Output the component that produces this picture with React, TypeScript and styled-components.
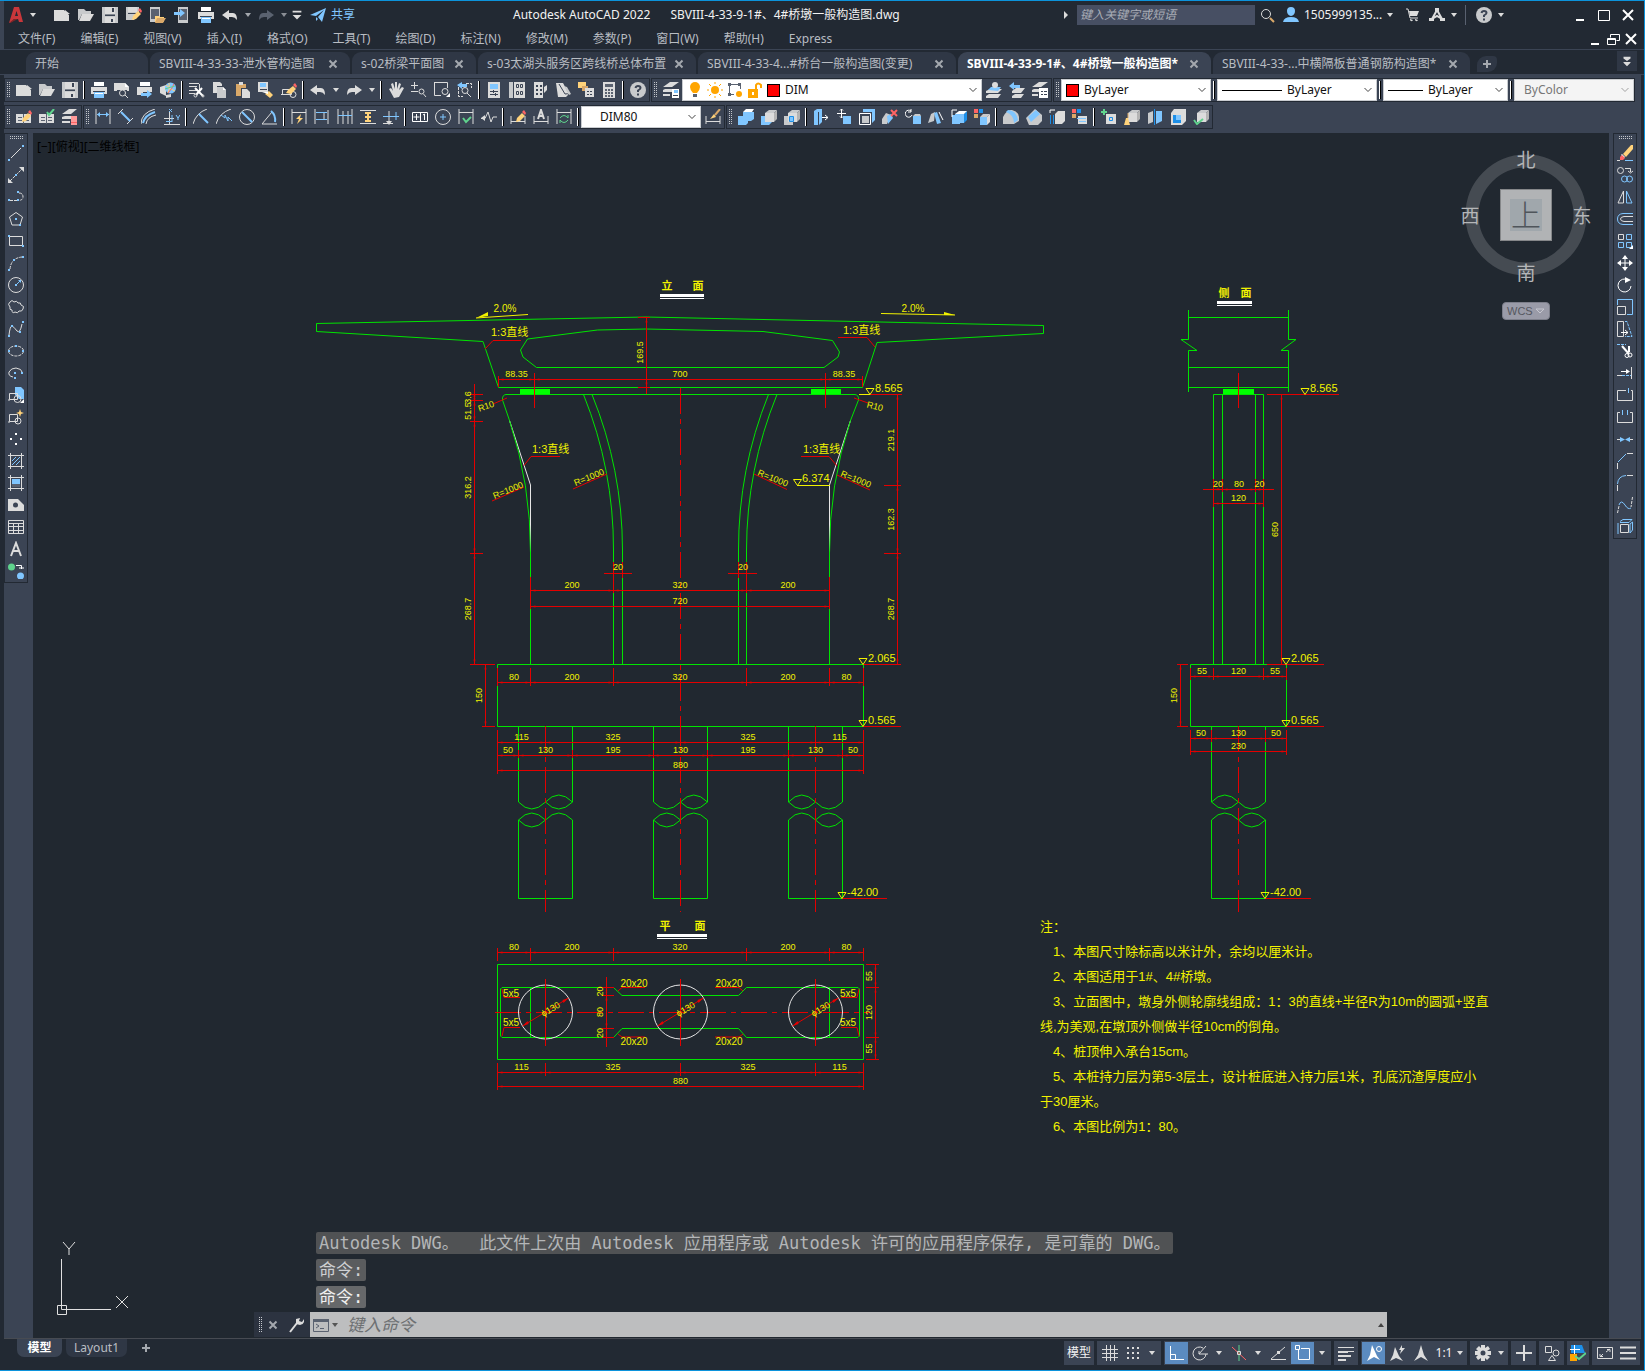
import React from "react";
import styled, { createGlobalStyle, css } from "styled-components";

const color = {
  chrome: "#222933",
  panel: "#3b4454",
  tab: "#2f3745",
  canvas: "#212830",
  edge: "#0c93dc",
  text: "#b9bdc3",
  bright: "#f2f2f2",
  green: "#00e400",
  red: "#e40000",
  yellow: "#f2f200",
};

const ui = `"Noto Sans", "Noto Sans CJK SC", sans-serif`;
const mono = `"DejaVu Sans Mono", "Noto Sans CJK SC", monospace`;
const cad = `"Liberation Sans", "Noto Sans CJK SC", sans-serif`;

const GlobalStyle = createGlobalStyle`
  *, *::before, *::after { box-sizing: border-box; }
  html, body, #root { height: 100%; }
  body { margin: 0; background: ${color.chrome}; font: 12px/16px ${ui}; color: ${color.text}; }
  button, input, select { font: inherit; color: inherit; }
  button { border: 0; padding: 0; background: none; }
`;

/* ---------- icons ---------- */

const palette: Record<string, string> = {
  W: "#dcdcdc", B: "#80c6ff", Y: "#ffd27a", R: "#ff6464", G: "#5fd38d", O: "#ffa500",
  D: "#3b4454", K: "#5a6270", L: "#b4b4b4", X: "#ffffff", M: "#c8cacc", P: "#ff9a9a", A: "#d23a3a", U: "#1d8fe8", T: "#d9a869", Z: "#8d3030",
};

// Each layer is [mode + palette key, path]; mode "s" strokes, "h" strokes dashed, "w" strokes wide, "f" fills.
type Layer = [string, string];

const page: Layer = ["fW", "M0 3H10L15 8V14H0Z M11 3L16 7H11Z"];
const folder: Layer[] = [["fM", "M0 2H6L8 4H13V7H4L1 13H0Z"], ["fW", "M4 7H16L12 14H1Z"]];
const disk: Layer[] = [["fM", "M0 0H16V16H0Z"], ["fW", "M3 0H13V7H3Z M3 10H13V16H3Z"], ["fD", "M3 7.5H13V9H3Z M9 12H11V15H9Z M10 1H12V5H10Z"]];
const printer: Layer[] = [["fX", "M3 0H13V4H3Z"], ["fW", "M0 5H16V12H0Z"], ["fD", "M2 9H14V10H2Z"], ["fB", "M3 10H13V16H3Z"], ["fX", "M4 11H12V12H4Z"]];
const pencil: Layer[] = [["fY", "M6 13L7 9L12 4L15 7L10 12Z"], ["fR", "M12 3L14 1L16 4L15 6Z"]];
const boxW: Layer[] = [["fM", "M4 4L8 1H16L13 4Z"], ["fW", "M4 4H13V13H4Z"], ["fL", "M13 4L16 1V10L13 13Z"]];
const boxB: Layer[] = [["fU", "M13 5L16 2V11L13 14Z"], ["fB", "M4 5H13V14H4Z"], ["fX", "M4 5L8 2H16L13 5Z"]];

const icons: Record<string, Layer[]> = {
  new: [page],
  open: folder,
  save: disk,
  saveas: [["fM", "M0 0H13V7L8 13H0Z"], ["fW", "M2 0H11V5H2Z"], ["fD", "M2 6H12V7H2Z"], ...pencil],
  device: [["fM", "M0 0H10V15H0Z"], ["fK", "M1 2H9V12H1Z"], ["fY", "M5 9H9L10 10H14V15H5Z"], ["fT", "M7 11H16L13 16H5Z"]],
  web: [["fM", "M4 0H14V16H4Z"], ["fK", "M5 2H13V13H5Z"], ["fB", "M0 5H6V2L11 6L6 10V8H0Z"]],
  print: printer,
  undo: [["fW", "M0 8L7 3V6H11Q15 6 15 13Q13 10 10 10H7V13Z"]],
  redo: [["fW", "M16 8L9 3V6H5Q1 6 1 13Q3 10 6 10H9V13Z"]],
  redoOff: [["fK", "M16 8L9 3V6H5Q1 6 1 13Q3 10 6 10H9V13Z"]],
  custom: [["fW", "M3 3H13V5H3Z M3 8H13L8 13Z"]],
  share: [["fB", "M0 8L16 1L12 15L8 10L14 3L6 9Z M6 10L8 12L6 14Z"]],
  search: [["sW", "M11.5 7A4.5 4.5 0 1 1 2.500 7A4.500 4.500 0 1 1 11.500 7Z"], ["wT", "M11 11L15 15"]],
  user: [["fB", "M4 4a4 4 0 1 1 8 0a4 5 0 1 1 -8 0Z M0 15Q1 10 8 10Q15 10 16 15Z"]],
  cart: [["fW", "M4 4H14L12 9H5Z M5 12a1 1 0 1 0 3 1Z M10 12a1 1 0 1 0 3 1Z"], ["sW", "M1 2H3L5 11H13"]],
  app: [["wW", "M8 3L3 12M8 3L13 12M3 12L8 9L13 12"], ["fW", "M6 1H10V5H6Z M0 11H5V14H0Z M11 11H16V14H11Z"]],
  help: [["fM", "M0 8a8 8 0 1 1 16 0a8 8 0 1 1 -16 0Z"], ["wD", "M5.500 6Q6 4 8 4Q10.500 4 10.500 6Q10.500 7 8 8.500V10"], ["fD", "M7 11.500H9V13.500H7Z"]],
  min: [["wX", "M4 13H12"]],
  max: [["sX", "M2.500 3.500H13.500V13.500H2.500Z"]],
  close: [["wX", "M3 3L13 13M13 3L3 13"]],
  restore: [["sX", "M5.500 6.500V3.500H14.500V9.500H11.500"], ["sX", "M2.500 7.500H10.500V13.500H2.500Z"], ["sX", "M3 8.500H10"]],
  preview: [["fW", "M0 1H11L15 5V9H0Z"], ["fX", "M11 1V5H15Z"], ["fD", "M3 8H13V9H3Z"], ["sW", "M5.500 11a3 3 0 1 1 6 0a3 3 0 1 1 -6 0M11 13L14 16"]],
  publish: [["fX", "M3 0H13V4H3Z"], ["fW", "M0 5H15V10H6V13H0Z"], ["fB", "M4 11H10V8L15 12L10 16V14H4Z"]],
  globe: [["fW", "M0 5L6 3V14L0 11Z M6 13L11 12V15L6 16Z"], ["fB", "M5 6a5.500 5.500 0 1 1 11 0a5.500 5.500 0 1 1 -11 0"], ["sY", "M6 3Q11 8 15 9M9 1Q10 7 8 11"], ["sR", "M14 2Q12 7 8 11"], ["sG", "M5 7Q11 5 15 4"]],
  cut: [["sW", "M0 1.500H10M0 4.500H8M0 8.500H8M0 11.500H6M10.500 2V9"], ["wX", "M6 6L14 14M13 6L7 13"], ["sW", "M5 13.500a1.500 1.500 0 1 1 3 0a1.500 1.500 0 1 1 -3 0M13 14a1 1 0 1 1 2 0a1 1 0 1 1 -2 0"]],
  copy: [["fW", "M1 0H8L10 2V11H1Z"], ["sD", "M5 4.500H13"], ["fM", "M5 5H11L14 8V16H5Z"], ["fX", "M11 5V8H14Z"]],
  paste: [["fT", "M1 2H11V6H6V14H1Z"], ["fW", "M4 0H8V3H4Z M7 7H12L15 10V16H7Z"]],
  match: [["fW", "M0 0H10V10H0Z"], ["fB", "M2 1H8V5H2Z"], ["sD", "M2 7.500H9"], ["fY", "M7 12L11 9L15 13L12 16Z"], ["fX", "M4 10H10V12Z"]],
  blockEdit: [["sW", "M1.500 7.500H10.500V12.500H1.500ZM0 12.500H9"], ["sW", "M9 12.500a3 3 0 1 1 6 0a3 3 0 1 1 -6 0"], ...pencil.map(([m, d]) => [m, d.replace("M6 13L7 9", "M5 11L7 8")] as Layer)],
  pan: [["fW", "M1 7L3 6L5 9L3 2L5 1L7 7V0H9V7L11 1L13 2L11 8L14 5L16 6L11 15L6 16Z"]],
  zoom: [["sW", "M0 3.500H7M3.500 0V7M0 9.500H7"], ["sW", "M8 9.500a2.500 2.500 0 1 1 5 0a2.500 2.500 0 1 1 -5 0M12.500 12L15 15"]],
  zoomWin: [["sW", "M0.500 0.500H13.500V6M0.500 0V13.500H7"], ["sW", "M8 9.500a3 3 0 1 1 6 0a3 3 0 1 1 -6 0"], ["fX", "M12 15H16V11Z"]],
  zoomPrev: [["hW", "M1.500 5V14.500H6M9 1.500H14.500V6"], ["fB", "M0 3L5 0V2H10V5H5V7Z"], ["sW", "M5 8.500a3 3 0 1 1 6 0a3 3 0 1 1 -6 0M10 11L14 15"]],
  props: [["fW", "M2 0H14V16H2Z"], ["fB", "M4 2H12V7H4Z"], ["sD", "M4 9.500H12M4 12.500H12M7.500 8V11M9.500 11V14"]],
  center: [["fM", "M0 0H4V16H0Z"], ["fW", "M5 0H16V16H5Z"], ["sD", "M7.500 2.500H9.500V5.500H7.500ZM11.500 2.500H13.500V5.500H11.500ZM7.500 9.500H9.500V12.500H7.500ZM11.500 9.500H13.500V12.500H11.500Z"]],
  palettes: [["fW", "M2 0H11V16H2Z M12 5L15 3V8L12 11Z"], ["fD", "M4 3H6V5H4Z M8 3H10V5H8Z M4 7H6V9H4Z M8 7H10V9H8Z M4 11H6V13H4Z M8 11H10V13H8Z"]],
  sheets: [["fW", "M1 1H8L14 12L11 15H3Z"], ["sD", "M4 2L10 12Q13 11 14 13"], ["fM", "M9 4L12 5L16 12L14 13Z"]],
  markup: [["fY", "M0 0H8V6H0Z"], ["fT", "M4 4H10V9H4Z"], ["fW", "M7 6H16V15H7Z"], ["sD", "M9 9.500H11M12 9.500H14M9 12.500H11M12 12.500H14"]],
  calc: [["fW", "M2 0H14V16H2Z"], ["fK", "M4 2H12V5H4Z M4 7H6V9H4Z M7 7H9V9H7Z M10 7H12V9H10Z M4 10H6V12H4Z M7 10H9V12H7Z M10 10H12V12H10Z M4 13H6V15H4Z M7 13H9V15H7Z M10 13H12V15H10Z"]],
  layers: [["fW", "M0 5L7 0H16L9 5Z M0 8L2 7H9V10H0Z M0 12H7V14H0Z"], ["fX", "M9 7H16V16H9Z"], ["fB", "M11 8H15V11H11Z"], ["sD", "M10 13.500H15"]],
  layerCur: [["fW", "M0 9L4 7H16L12 11H0Z M0 14L3 12H15L12 16H0Z"], ["fB", "M2 8L5 5H15L12 9Z"], ["fW", "M6 3a3 3 0 1 1 6 0a3 3 0 1 1 -6 0Z"]],
  layerPrev: [["fW", "M3 9L7 6H16L12 11H3Z M3 14L6 12H15L12 16H3Z"], ["fB", "M0 4L5 0V3H11V6H5V8Z"]],
  layerState: [["fW", "M0 5L7 0H16L9 5Z M0 8L2 7H9V10H0Z M0 12H6V14H0Z"], ["fX", "M7 6H16V16H7Z"], ["sD", "M9 9.500H11M12 9.500H15M9 12.500H11M12 12.500H15"]],
  bookEdit: [["fW", "M0 5H7V14H0Z M8 5H15V14H8Z"], ["sK", "M2 8.500H6M2 11.500H6M9 11.500H13M7.500 5V15"], ...pencil],
  bookCheck: [["fW", "M0 5H7V14H0Z M8 5H15V14H8Z"], ["sK", "M2 8.500H6M2 11.500H6M9 8.500H13M9 11.500H13M7.500 5V15"], ["wG", "M8 3L10 6L15 0"]],
  layerDel: [["fW", "M0 5L7 0H15L9 5Z M0 8L3 7H10V10H0Z M0 12H8V14H0Z"], ["fP", "M9 7H15V16H9Z"], ["sR", "M9 13.500H15"]],
  dimLin: [["sW", "M1 0V15M15 0V15"], ["sB", "M2 5.500H14"], ["fB", "M2 5.500L5 3V8Z M14 5.500L11 3V8Z"]],
  dimAli: [["sW", "M0 5L5 0M9 15L15 9"], ["wB", "M3 3L12 12"]],
  dimArc: [["sW", "M0 15Q0 4 14 0M5 15Q6 8 15 6"], ["wB", "M2 14Q4 6 14 3"]],
  dimOrd: [["sW", "M0 9.500H10M5.500 2V15.500M0 15.500H16"], ["sB", "M2 12.500H8M8 6V13M12 6L14 9L16 6M14 9V11M5 0L8 3M8 0L5 3"]],
  dimRad: [["sW", "M0 15Q3 4 14 0"], ["wB", "M6 5L15 14"]],
  dimJog: [["sW", "M0 15Q3 4 15 0"], ["sB", "M5 6L9 9V6L12 12V8L16 12"]],
  dimDia: [["sW", "M0.500 8a7.500 7.500 0 1 1 15 0a7.500 7.500 0 1 1 -15 0"], ["wB", "M3 3L13 13"]],
  dimAng: [["sW", "M0 15H15M0 15L10 3"], ["wB", "M9 2Q14 6 13 13"]],
  dimQuick: [["sW", "M1 0V15M15 0V15M1 3.500H15"], ["fY", "M10 5L5 10H8L6 15L12 9H9Z"]],
  dimBase: [["sW", "M1 0V15M10 4V10M14 1V15"], ["sB", "M2 3.500H13M2 10.500H13"]],
  dimCont: [["sW", "M1 0V15M6 2V15M11 2V15M15 0V15"], ["sB", "M1 6.500H15"]],
  dimSpace: [["sW", "M0 1.500H16M0 14.500H16"], ["fY", "M5 3H11V5H9V7H11V9H9V11H11V13H5V11H7V9H5V7H7V5H5Z"]],
  dimBreak: [["sW", "M6 2V14M0 14.500H10"], ["sB", "M0 7.500H16M13 3V11"], ["fW", "M3 12L6 16L9 12Z"]],
  tol: [["sX", "M0.500 3.500H15.500V12.500H0.500ZM8.500 3V13M4.500 5V11M1.500 8H7.500M11 6L12.500 5V11"]],
  mark: [["sW", "M0.500 8a7.500 7.500 0 1 1 15 0a7.500 7.500 0 1 1 -15 0"], ["sB", "M8 5V11M5 8H11"]],
  inspect: [["sW", "M1 0V15M15 0V15M1 3.500H15"], ["wG", "M5 9L8 13L13 8"]],
  jogLine: [["sW", "M0 9.500H4L7 3L10 13L12 8H16"], ["fW", "M0 9L4 6V12Z"]],
  dimEdit: [["sW", "M1 7V15M15 7V15M1 12.500H15"], ...pencil],
  dimText: [["sW", "M1 7V15M15 7V15M1 12.500H15"], ["wW", "M5 10L8 1L11 10M6 7H10"]],
  dimUpd: [["sW", "M1 0V15M15 0V15M1 3.500H15"], ["sG", "M4 9Q8 4 12 9M12 9V6M12 11Q8 16 4 11M4 11V14"]],
  dimStyle: [["sW", "M1 7V15M15 7V15M1 12.500H15"], ["fY", "M5 10L9 5L11 8Z"], ["wT", "M10 6L15 0"]],
  union: [["fB", "M0 7H5V3H16V10L13 12H10V14L8 16H0Z"], ["fX", "M5 3L8 0H16L14 3Z"]],
  subtract: [["fB", "M0 7H8V16H0Z M8 16L11 13H8Z"], ...boxW],
  intersect: [["fM", "M0 7H9V16H0Z"], ...boxW, ["sU", "M5.500 7.500H9.500V12.500H5.500Z"], ["fB", "M6 8H9V12H6Z"]],
  extrude: [["fB", "M1 2L4 0H9V13L6 16H1Z"], ["sD", "M5.500 3V16"], ["sX", "M9 8.500H15M12 6L15 8.500L12 11"]],
  moveFace: [["sX", "M5.500 0V9M1 4.500H10M4 1.500L5.500 0L7 1.500M4 7.500L5.500 9L7 7.500"], ["fB", "M7 7H15V15H7Z"]],
  offsetFace: [["fB", "M4 0H16V11L13 14V3H4Z"], ["sX", "M0.500 4.500H11.500V15.500H0.500Z"], ["fM", "M3 7H10V14H3Z"]],
  delFace: [["fM", "M0 10L4 4L9 6L5 15H0Z"], ["fB", "M5 7L9 5L11 9L6 15Z"], ["wR", "M9 1L15 7M15 1L9 7"]],
  rotFace: [["sX", "M6 2A3.500 3.500 0 1 0 7 6M6 0V3H3"], ["fB", "M8 7H16V15H8Z"], ["fM", "M8 7L10 5H15L16 7Z"]],
  taper: [["fM", "M0 14L3 5L7 3L6 12Z"], ["fB", "M6 4L9 3L13 14L9 15Z"], ["sX", "M11 3L15 11"]],
  copyFace: [...boxB, ["fB", "M1 6H9V15H1Z"], ["sX", "M1 8V1H6"]],
  colorFace: [["fR", "M0 0H4V4H0Z"], ["fU", "M5 0H9V4H5Z"], ["fT", "M0 5H4V9H0Z"], ["fM", "M6 8L9 5H16L13 8Z"], ["fB", "M6 8H13V16H6Z"], ["fW", "M13 8L16 5V13L13 16Z"]],
  filletEdge: [["fM", "M0 8Q4 0 9 1Q16 3 16 8V12L11 15H0Z"], ["fB", "M5 1Q13 1 15 11L11 14Q11 6 3 3Z"]],
  chamferEdge: [["fM", "M0 9L9 0L16 6V12L12 16H3Z"], ["fB", "M2 8L10 1L14 5L5 13Z"]],
  copyEdge: [["fW", "M6 5L9 2H16V12L13 15H6Z"], ["sU", "M1.500 6V15M4.500 6V15"], ["sX", "M1 4V1H6"]],
  colorEdge: [["fR", "M0 0H4V4H0Z"], ["fU", "M5 0H9V4H5Z"], ["fT", "M0 5H4V9H0Z"], ["fW", "M6 7H15V15H6Z"], ["sB", "M5 9.500H14M7 12.500H14"]],
  imprint: [["wG", "M3 0V6M0 3H6"], ["fW", "M5 5H15V15H5Z"], ["sU", "M8.500 8.500H11.500V11.500H8.500Z"]],
  clean: [...boxW, ["fY", "M2 9L4 9L6 16H0Z"], ["sT", "M4 4V9"]],
  separate: [["fM", "M1 4L6 2V13L1 15Z"], ["fB", "M9 2L15 2V12L9 15Z"], ["sU", "M7.500 0V16"]],
  shell: [["fW", "M1 4L4 0H16V12L12 16H1Z"], ["fU", "M3 6H11V14H3Z"], ["fB", "M6 6H11V11H6Z"]],
  check: [...boxW, ["wG", "M1 11L4 15L10 10"]],
  line: [["sW", "M3 13L13 3"], ["fB", "M0 14H2V16H0Z M14 0H16V2H14Z"]],
  xline: [["hW", "M2 14L14 2"], ["fW", "M0 16V11L5 16Z M16 0V5L11 0Z"], ["fB", "M7 7H9V9H7Z"]],
  pline: [["hW", "M2 11.500H9M11 4Q15 4 15 8Q15 11 11 11.500"], ["fB", "M0 10H2V12H0Z M9 10H11V12H9Z M9 2H11V4H9Z"]],
  polygon: [["sW", "M8 1.500L14.500 6L12 14H4L1.500 6Z"], ["fB", "M7 7H9V9H7Z M11 13H13V15H11Z"]],
  rect: [["sW", "M1.500 3.500H14.500V12.500H1.500Z"], ["fB", "M0 2H2V4H0Z M14 12H16V14H14Z"]],
  arc: [["hW", "M2 14Q3 3 14 2"], ["fB", "M0 14H2V16H0Z M5 4H7V6H5Z M14 1H16V3H14Z"]],
  circle: [["sW", "M0.500 8a7.500 7.500 0 1 1 15 0a7.500 7.500 0 1 1 -15 0"], ["fB", "M7 7H9V9H7Z M10 3H13V6Z"], ["sB", "M9 7L12 4"]],
  cloud: [["sW", "M2 3Q4 0 6 3Q9 1 10 4Q13 3 13 6Q17 7 15 10Q14 13 11 12Q10 15 7 13Q4 15 4 11Q1 11 2 8Q-1 5 2 3Z"]],
  spline: [["sW", "M1 14Q2 5 4 5Q5 5 9 10Q12 13 14 3"], ["fB", "M0 14H2V16H0Z M3 4H5V6H3Z M11 10H13V12H11Z M14 0H16V2H14Z"]],
  ellipse: [["hW", "M0.500 8a7.500 5 0 1 1 15 0a7.500 5 0 1 1 -15 0"], ["fB", "M0 7H2V9H0Z M7 2H9V4H7Z M14 7H16V9H14Z"]],
  ellArc: [["sW", "M5 12Q0 11 1 7Q3 3 8 3Q14 4 14 7"], ["fB", "M6 7H8V9H6Z M13 7H15V9H13Z M6 12H8V14H6Z"]],
  insert: [["fB", "M7 0H13L16 3V12H11L7 8Z"], ["sW", "M1.500 6.500H9.500V12.500H1.500ZM0 13H2"], ["sW", "M6 12a3.500 3.500 0 1 1 7 0a3.500 3.500 0 1 1 -7 0"], ["fX", "M12 16H16V12Z"]],
  block: [["sW", "M1.500 5.500H9.500V12.500H1.500ZM0 13H2"], ["sW", "M7 12a3 3 0 1 1 6 0a3 3 0 1 1 -6 0"], ["fY", "M12 0L13 3L16 4L13 5L12 8L11 5L8 4L11 3Z"]],
  point: [["fX", "M7 2H9V4H7Z M2 7H4V9H2Z M12 7H14V9H12Z M7 12H9V14H7Z"]],
  hatch: [["sW", "M2.500 0V16M13.500 0V16M0 2.500H16M0 13.500H16"], ["sB", "M4 8L8 4M4 12L12 4M8 12L12 8"]],
  gradient: [["sW", "M2.500 0V16M13.500 0V16M0 2.500H16M0 13.500H16"], ["fB", "M4 4H12V9H4Z"], ["fK", "M4 9H12V12H4Z"]],
  region: [["fW", "M0 2H10L16 8V14H0Z"], ["fD", "M5 8a2.500 2.500 0 1 1 5 0a2.500 2.500 0 1 1 -5 0"]],
  table: [["sW", "M0.500 1.500H15.500V14.500H0.500ZM0 4.500H16M0 7.500H16M0 11.500H16M5.500 5V15M10.500 5V15"]],
  text: [["wW", "M3 15L8 2L13 15M5 10H11"]],
  addSel: [["fG", "M0 4a3.500 3.500 0 1 1 7 0a3.500 3.500 0 1 1 -7 0"], ["fB", "M9 13a3.500 3.500 0 1 1 7 0a3.500 3.500 0 1 1 -7 0"], ["sX", "M8 2.500H13.500V6M11 5H16"]],
  erase: [["fY", "M6 9L14 0H16V4L9 12Z"], ["fX", "M5 9L8 12L7 13L4 10Z"], ["fR", "M3 12L5 10L8 13L6 15H3Z"], ["sB", "M8 15.500H16"], ["sW", "M0 15.500H3"]],
  copyObj: [["sW", "M0.500 3.500a3 3 0 1 1 6 0a3 3 0 1 1 -6 0M8 1.500H13.500V5M11 4L13.500 6L16 4"], ["sB", "M4.500 12a3 3 0 1 1 6 0a3 3 0 1 1 -6 0M9.500 12a3 3 0 1 1 6 0a3 3 0 1 1 -6 0"]],
  mirror: [["sW", "M6.500 2V14H1ZL6.500 2"], ["sB", "M9.500 2V14H15Z"]],
  offset: [["sB", "M16 2.500H6Q0.500 3 0.500 8Q0.500 13 6 13.500H16"], ["sW", "M16 5.500H7Q3.500 6 3.500 8Q3.500 10 7 10.500H16"]],
  array: [["sW", "M1.500 1.500H6.500V6.500H1.500Z"], ["sB", "M9.500 1.500H14.500V6.500H9.500ZM1.500 9.500H6.500V14.500H1.500ZM9.500 9.500H14.500V14.500H9.500Z"], ["fX", "M12 16H16V12Z"]],
  move: [["sX", "M8 1V15M1 8H15"], ["fX", "M8 0L11 4H5Z M8 16L5 12H11Z M0 8L4 5V11Z M16 8L12 5V11Z"]],
  rotate: [["sX", "M11 3A6.500 6.500 0 1 0 14 9"], ["fX", "M8 0L14 3L8 6Z"]],
  scale: [["sB", "M0.500 6V0.500H15.500V15.500H10"], ["sW", "M0.500 7.500H8.500V15.500H0.500Z"]],
  stretch: [["sW", "M0.500 0.500H6.500V15.500H0.500Z"], ["hB", "M8 0.500H10L15 15.500H8"], ["sX", "M4 11.500H11M8 9L11 11.500L8 14"]],
  trim: [["hB", "M0 1.500H9"], ["wX", "M5 3L12 11M12 3V9"], ["sX", "M8 12.500a2 2 0 1 1 4 0a2 2 0 1 1 -4 0M11 12a2 2 0 1 1 4 0a2 2 0 1 1 -4 0"]],
  extend: [["sW", "M14.500 2V14M0 10.500H5"], ["hB", "M5 10.500H14"], ["sX", "M4 6.500H12"], ["fX", "M9 4L13 6.500L9 9Z"]],
  breakPt: [["sW", "M9 3.500H0.500V13.500H15.500V3.500H14"], ["sB", "M11.500 1V6"]],
  breakObj: [["sW", "M3 3.500H0.500V13.500H15.500V3.500H13"], ["sB", "M5.500 1V6M10.500 1V6"]],
  join: [["sW", "M0 8.500H4M12 8.500H16"], ["fB", "M3 6L8 8.500L3 11Z M13 6L8 8.500L13 11Z"]],
  chamfer: [["sW", "M0.500 10V16M10 0.500H16"], ["sB", "M1 9L9 1"]],
  fillet: [["sW", "M0.500 10V16M10 0.500H16"], ["sB", "M0.500 9Q1 1 9 0.500"]],
  blend: [["hW", "M0.500 16L2 9M15.500 0L14 10"], ["sB", "M2 8Q4 2 8 8Q11 13 14 11"]],
  explode: [["sW", "M3.500 5.500H11.500V13.500H3.500Z"], ["sB", "M1 4V15M3 2.500L6 0.500H15L12 3.500H3M15.500 3V11L13 14V5Z"]],
  grid: [["sW", "M4.500 0V16M8.500 0V16M12.500 0V16M0 4.500H16M0 8.500H16M0 12.500H16"]],
  snap: [["fW", "M2 2H4V4H2Z M7 2H9V4H7Z M12 2H14V4H12Z M2 7H4V9H2Z M7 7H9V9H7Z M12 7H14V9H12Z M2 12H4V14H2Z M7 12H9V14H7Z M12 12H14V14H12Z"]],
  ortho: [["sX", "M1.500 1V14.500H15M1.500 9.500H6.500V15"]],
  polar: [["sW", "M14 9A6.500 6.500 0 1 1 11 3M7 9H16M7 9L14 1M7 9V6"]],
  iso: [["sG", "M8 0V16"], ["sR", "M1 2L15 15"], ["sW", "M6.500 6.500H9.500V9.500H6.500Z"]],
  track: [["sW", "M0 14.500H15M0 14L14 2"], ["fW", "M6 6H9V9H6Z"]],
  osnap: [["sX", "M3.500 5V14.500H14.500V3.500H6"], ["sX", "M0.500 0.500H4.500V4.500H0.500Z"]],
  weight: [["fW", "M0 2H16V3H0Z M0 6H10V8H0Z M9 6H16V7H9Z M0 10H13V12H0Z M0 14H8V16H0Z"]],
  annoVis: [["fX", "M6 0L11 11L14 15L8 12L1 16L4 10Z"], ["sX", "M10.500 4a2.500 2.500 0 1 1 5 0a2.500 2.500 0 1 1 -5 0"]],
  annoAuto: [["fW", "M6 2L10 11L14 16L7 13L1 16L4 10Z M13 0L10 5H12L11 9L16 3H13Z"]],
  anno: [["fW", "M8 0L11 10L15 16L8 12L1 16L5 10Z"]],
  gear: [["fW", "M6 0H10V3L13 1L15 4L12 6H16V10H12L15 12L12 15L10 13V16H6V13L3 15L1 12L3 10H0V6H3L1 4L4 1L6 3Z"], ["fD", "M5.500 8a2.500 2.500 0 1 1 5 0a2.500 2.500 0 1 1 -5 0"]],
  plus: [["wW", "M8 0V16M0 8H16"]],
  isolate: [["sW", "M1.500 1.500H7.500V7.500H1.500ZM9 8a3 3 0 1 1 6 0a3 3 0 1 1 -6 0M8 10.500L11.500 15.500H4.500Z"]],
  hardware: [["fU", "M1 0H12L15 8H1Z"], ["sX", "M0 4.500H10M4.500 0V9"], ["fO", "M0 9H7V16H0Z"], ["wG", "M5 11L9 14L16 8"]],
  screen: [["sW", "M0.500 2.500H15.500V13.500H0.500ZM9 7L13 4M10 4.500H13V7M6 9L3 12M3 9V11.500H6"]],
  menu: [["wW", "M0 2.500H16M0 8H16M0 13.500H16"]],
  wrench: [["wW", "M2 15L9 6"], ["fW", "M8 2L12 1L11 4L14 5L16 2Q17 7 12 8L8 7Z"]],
  prompt: [["sK", "M0.500 2.500H15.500V14.500H0.500Z"], ["fK", "M0 2H16V5H0Z"], ["sK", "M3 7L6 9L3 11M7 11.500H11"]],
  bulb: [["fO", "M3 5a5 5 0 1 1 10 0Q13 8 10 11H6Q3 8 3 5"], ["fK", "M6 12H10V15H6Z"]],
  sun: [["fO", "M4 8a4 4 0 1 1 8 0a4 4 0 1 1 -8 0"], ["sO", "M8 0V2M8 14V16M0 8H2M14 8H16M2 2L4 4M12 12L14 14M14 2L12 4M2 14L4 12"]],
  vp: [["sK", "M3 2.500H11.500M13.500 4V7M2.500 4V12M4 12.500H7"], ["fK", "M1 1H4V4H1Z M11 1H14V4H11Z M1 11H4V14H1Z"], ["fO", "M9 12a3 3 0 1 1 6 0a3 3 0 1 1 -6 0"]],
  lock: [["fO", "M1 7H11V16H1Z"], ["wO", "M9 7V3Q11 0 14 3V6"], ["fX", "M5 10H7V13H5Z"]],
  overflow: [["fW", "M4 3H12V5L8 8L4 5Z M4 9H12V10L8 14L4 10Z"]],
};

const Glyph = styled.svg<{ $s?: number }>`
  display: block;
  flex: none;
  width: ${(p) => p.$s || 16}px;
  height: ${(p) => p.$s || 16}px;
`;

function Icon({ name, size }: { name: string; size?: number }) {
  return (
    <Glyph viewBox="0 0 16 16" $s={size} aria-hidden="true">
      {icons[name].map(([m, d], i) => {
        const c = palette[m[1]];
        return m[0] === "f" ? (
          <path key={i} d={d} fill={c} />
        ) : (
          <path key={i} d={d} fill="none" stroke={c} strokeWidth={m[0] === "w" ? 2 : 1} strokeDasharray={m[0] === "h" ? "3 1" : undefined} />
        );
      })}
    </Glyph>
  );
}

const CaretShape = styled.span<{ $c?: string }>`
  width: 0;
  height: 0;
  border: 3px solid transparent;
  border-top: 4px solid ${(p) => p.$c || "#dcdcdc"};
  border-bottom: 0;
`;

/* ---------- window frame ---------- */

const Window = styled.div`
  display: flex;
  flex-direction: column;
  min-height: 100vh;
  background: ${color.chrome};
  border-top: 1px solid ${color.edge};
  border-right: 1px solid ${color.edge};
  border-bottom: 1px solid ${color.edge};
`;

const Header = styled.header`
  border-left: 4px solid ${color.panel};
  border-bottom: 1px solid ${color.panel};
  padding-right: 4px;
`;

const TitleBar = styled.div`
  display: flex;
  align-items: center;
  height: 27px;
`;

const Quick = styled.div`
  display: flex;
  align-items: center;
  width: 509px;
  flex: none;
`;

const ToolButton = styled.button<{ $w?: number; $h?: number; $on?: boolean }>`
  display: flex;
  align-items: center;
  justify-content: center;
  gap: 5px;
  flex: none;
  width: ${(p) => p.$w || 23}px;
  height: ${(p) => p.$h || 22}px;
  ${(p) => p.$on && css`background: #5b8bc0;`}
`;

const Gap = styled.span<{ $w: number }>`
  flex: none;
  width: ${(p) => p.$w}px;
`;

const ShareButton = styled.button`
  display: flex;
  align-items: center;
  gap: 5px;
  margin-left: 6px;
  color: #80c6ff;
`;

const DocTitle = styled.h1`
  display: flex;
  gap: 20px;
  flex: 1;
  margin: 0;
  font-size: 12px;
  font-weight: 400;
  white-space: nowrap;
  color: ${color.bright};
`;

const RightTools = styled.div`
  display: flex;
  align-items: center;
  width: 582px;
  flex: none;
`;

const SearchBox = styled.input`
  width: 178px;
  height: 20px;
  margin-left: 5px;
  border: 0;
  padding: 0 3px;
  background: #474f63;
  font-style: italic;
  &::placeholder { color: #a9adb6; }
`;

const UserButton = styled.button`
  display: flex;
  align-items: center;
  gap: 5px;
  width: 122px;
  padding-left: 4px;
  color: ${color.bright};
`;

const Rule = styled.span`
  width: 1px;
  height: 20px;
  margin: 0 6px;
  background: #596170;
`;

const WindowKeys = styled.div`
  display: flex;
  margin-left: auto;
`;

const MenuBar = styled.nav`
  display: flex;
  align-items: flex-end;
  gap: 25px;
  height: 21px;
  padding-left: 14px;
`;

const MenuItem = styled.button`
  white-space: nowrap;
  line-height: 20px;
`;

/* ---------- file tabs ---------- */

const TabStrip = styled.div`
  display: flex;
  align-items: flex-end;
  gap: 2px;
  height: 25px;
  padding: 0 7px 0 26px;
  border-bottom: 1px solid ${color.panel};
`;

const FileTab = styled.div<{ $w: number; $active?: boolean }>`
  display: flex;
  align-items: center;
  justify-content: space-between;
  width: ${(p) => p.$w}px;
  height: 22px;
  padding: 2px 12px 0 9px;
  border-radius: 9px 9px 0 0;
  background: ${(p) => (p.$active ? color.panel : color.tab)};
  color: ${(p) => (p.$active ? "#ffffff" : color.text)};
  font-weight: ${(p) => (p.$active ? 700 : 400)};
  white-space: nowrap;
`;

const AddTab = styled.button`
  width: 20px;
  height: 16px;
  margin: 0 0 2px 5px;
  border-radius: 9px 4px 9px 0;
  background: ${color.tab};
  display: flex;
  align-items: center;
  justify-content: center;
`;

const OverflowTab = styled.button`
  display: flex;
  align-items: center;
  justify-content: center;
  width: 20px;
  height: 20px;
  margin: 0 0 3px auto;
  background: ${color.tab};
`;

/* ---------- toolbars ---------- */

const Work = styled.div`
  flex: 1;
  display: flex;
  flex-direction: column;
  margin: 0 3px 0 4px;
  background: ${color.panel};
  border-bottom: 1px solid #474b52;
`;

const ToolRow = styled.div`
  display: flex;
  gap: 1px;
  height: 24px;
  margin: 3px 0 0;
`;

const Bar = styled.div<{ $vertical?: boolean }>`
  display: flex;
  align-items: center;
  flex: none;
  flex-direction: ${(p) => (p.$vertical ? "column" : "row")};
  border: 1px solid ${color.chrome};
`;

const Grip = styled.span<{ $vertical?: boolean }>`
  flex: none;
  width: ${(p) => (p.$vertical ? 14 : 7)}px;
  height: ${(p) => (p.$vertical ? 8 : 16)}px;
  padding: ${(p) => (p.$vertical ? "2px 0" : "0 2px 0 1px")};
  background: conic-gradient(#c4c7cb 25%, transparent 0) 0 0 / 2px 2px content-box content-box;
`;

const Divider = styled.span`
  flex: none;
  width: 2px;
  height: 18px;
  margin: 0 2px;
  background: linear-gradient(90deg, #ffffff 50%, #000000 50%);
`;

const Combo = styled.label<{ $w: number; $off?: boolean }>`
  position: relative;
  display: flex;
  align-items: center;
  gap: 4px;
  flex: none;
  width: ${(p) => p.$w}px;
  height: 22px;
  padding-left: 4px;
  background: ${(p) => (p.$off ? "#f4f4f4" : "#ffffff")};
  border: 1px solid #c9ccd0;
  color: ${(p) => (p.$off ? "#777777" : "#111111")};
`;

const Pick = styled.select<{ $indent?: number }>`
  flex: 1;
  min-width: 0;
  height: 20px;
  border: 0;
  padding: 0 18px 0 ${(p) => p.$indent || 0}px;
  appearance: none;
  background: transparent;
  opacity: 1;
`;

const ComboArrow = styled.svg`
  position: absolute;
  right: 4px;
  top: 7px;
  width: 8px;
  height: 6px;
  pointer-events: none;
`;

const Swatch = styled.span<{ $gap?: number }>`
  width: 13px;
  height: 13px;
  margin-right: ${(p) => p.$gap || 0}px;
  border: 1px solid #000000;
  background: #ff0000;
`;

const LineSample = styled.span<{ $w: number }>`
  width: ${(p) => p.$w}px;
  height: 1px;
  background: #000000;
`;

function Buttons({ names, w }: { names: string; w?: number }) {
  return (
    <>
      {names.split(" ").map((n, i) =>
        n === "|" ? (
          <Divider key={i} />
        ) : n === "v" ? (
          <ToolButton key={i} $w={13} aria-label="展开">
            <CaretShape />
          </ToolButton>
        ) : (
          <ToolButton key={i} $w={w} aria-label={n}>
            <Icon name={n} />
          </ToolButton>
        )
      )}
    </>
  );
}

function ComboBox(props: { w: number; label: string; value: string; indent?: number; off?: boolean; children?: React.ReactNode }) {
  return (
    <Combo $w={props.w} $off={props.off}>
      {props.children}
      <Pick aria-label={props.label} $indent={props.indent} disabled={props.off} defaultValue={props.value}>
        <option>{props.value}</option>
      </Pick>
      <ComboArrow viewBox="0 0 8 6" aria-hidden="true">
        <path d="M0.500 1L4 4.500L7.500 1" fill="none" stroke={props.off ? "#a0a0a0" : "#444444"} />
      </ComboArrow>
    </Combo>
  );
}

/* ---------- model space ---------- */

const Middle = styled.div`
  flex: 1;
  display: flex;
  align-items: flex-start;
  margin-top: 4px;
`;

const Side = styled.aside<{ $right?: boolean }>`
  flex: none;
  padding: ${(p) => (p.$right ? "0 4px 0 4px" : "0 5px 0 0")};
`;

const Model = styled.main`
  position: relative;
  flex: 1;
  align-self: stretch;
  min-width: 0;
  background: ${color.canvas};
  overflow: hidden;
`;

const Sheet = styled.svg`
  position: absolute;
  inset: 0;
  width: 100%;
  height: 100%;
  display: block;
`;

const ViewLabel = styled.div`
  position: absolute;
  left: 4px;
  top: 6px;
  color: #000000;
`;

const Cube = styled.div`
  position: absolute;
  right: 18px;
  top: 8px;
  width: 130px;
  text-align: center;
`;

const CubeSvg = styled.svg`
  display: block;
  width: 130px;
  height: 150px;
  font-family: "Noto Sans CJK SC", sans-serif;
`;

const Wcs = styled.button`
  display: inline-flex;
  align-items: center;
  justify-content: space-between;
  width: 48px;
  height: 18px;
  margin-top: 11px;
  padding: 0 4px;
  border: 1px solid #7d7f8b;
  border-radius: 4px;
  background: #9a9ba8;
  color: #55575f;
  font: 11px/16px "Liberation Sans", sans-serif;
`;

const Ucs = styled.svg`
  position: absolute;
  left: 20px;
  bottom: 19px;
  width: 80px;
  height: 80px;
`;

const Command = styled.section`
  position: absolute;
  left: 221px;
  right: 222px;
  bottom: 1px;
`;

const History = styled.ol`
  display: flex;
  flex-direction: column;
  align-items: flex-start;
  gap: 5px;
  margin: 0 0 4px 62px;
  padding: 0;
  list-style: none;
  font: 17px/22px ${mono};
`;

const HistoryLine = styled.li<{ $tone: number }>`
  height: 22px;
  padding: 0 3px;
  border-radius: 2px;
  background: ${(p) => ["#505254", "#5a5c5e", "#66686a"][p.$tone]};
  color: ${(p) => ["#b4b6b8", "#cfd0d2", "#f0f0f0"][p.$tone]};
  white-space: pre;
`;

const CommandRow = styled.div`
  display: flex;
  align-items: center;
  height: 25px;
  background: #2c3340;
`;

const CommandInput = styled.div`
  display: flex;
  align-items: center;
  align-self: stretch;
  flex: 1;
  gap: 3px;
  padding: 0 3px;
  background: #bdbebf;
`;

const CommandText = styled.input`
  flex: 1;
  min-width: 0;
  height: 24px;
  border: 0;
  padding: 0 6px;
  background: transparent;
  color: #333333;
  font: italic 17px/24px ${mono};
  &::placeholder { color: #6d7072; }
`;

const UpMark = styled.span`
  border: 3px solid transparent;
  border-bottom: 4px solid #444444;
  border-top: 0;
`;

/* ---------- bottom bar ---------- */

const Footer = styled.footer`
  display: flex;
  align-items: flex-start;
  height: 31px;
  padding: 0 4px 0 17px;
`;

const LayoutTab = styled.button<{ $on?: boolean; $w: number }>`
  width: ${(p) => p.$w}px;
  height: 18px;
  margin-right: 4px;
  border-radius: 0 0 7px 7px;
  background: ${(p) => (p.$on ? color.panel : color.tab)};
  color: ${(p) => (p.$on ? "#ffffff" : color.text)};
  font-weight: ${(p) => (p.$on ? 700 : 400)};
  line-height: 18px;
`;

const Status = styled.div`
  display: flex;
  gap: 3px;
  margin: 2px 0 0 auto;
`;

const StatusGroup = styled.div`
  display: flex;
  align-items: center;
  height: 24px;
  padding: 0 1px;
  background: ${color.panel};
  color: ${color.bright};
`;

/* ---------- drawing ---------- */

const Drawing = styled.g`
  fill: none;
  stroke-width: 1;
  .g { stroke: ${color.green}; }
  .r { stroke: ${color.red}; }
  .w { stroke: #e6e6e6; }
  .y { stroke: ${color.yellow}; }
  .c { stroke: ${color.red}; stroke-dasharray: 26 5 5 5; }
  .solid { fill: #00ff00; }
  .arrow { fill: ${color.red}; }
  .head { fill: ${color.yellow}; }
  .bar { fill: #ffffff; }
`;

const Label = styled.text<{ $size?: number; $bold?: boolean }>`
  fill: ${color.yellow};
  stroke: none;
  font-family: ${cad};
  font-size: ${(p) => p.$size || 9}px;
  font-weight: ${(p) => (p.$bold ? 700 : 400)};
`;

const NoteLine = styled.text`
  fill: ${color.yellow};
  font-family: ${cad};
  font-size: 13px;
  white-space: pre;
`;

function Mid({ x, y, t, a = 0, s = 9 }: { x: number; y: number; t: string; a?: number; s?: number }) {
  return (
    <Label x={x} y={y} dy="0.36em" $size={s} textAnchor="middle" transform={a ? `rotate(${a} ${x} ${y})` : undefined}>
      {t}
    </Label>
  );
}

// Horizontal dimension chain at height y; t0..t1 is the span of the extension ticks.
function DimH({ y, xs, labels, t0, t1 }: { y: number; xs: number[]; labels: string; t0: number; t1: number }) {
  const l = labels.split(" ");
  return (
    <g>
      <path className="r" d={`M${xs[0]} ${y}H${xs[xs.length - 1]}` + xs.map((x) => `M${x} ${t0}V${t1}`).join("")} />
      {xs.slice(1).map((x, i) => (
        <g key={i}>
          <path className="arrow" d={`M${xs[i]} ${y}l5 -1v2ZM${x} ${y}l-5 -1v2Z`} />
          <Mid x={(x + xs[i]) / 2} y={y - 6} t={l[i]} />
        </g>
      ))}
    </g>
  );
}

function DimV({ x, ys, labels, t0, t1 }: { x: number; ys: number[]; labels: string; t0: number; t1: number }) {
  const l = labels.split(" ");
  return (
    <g>
      <path className="r" d={`M${x} ${ys[0]}V${ys[ys.length - 1]}` + ys.map((y) => `M${t0} ${y}H${t1}`).join("")} />
      {ys.slice(1).map((y, i) => (
        <g key={i}>
          <path className="arrow" d={`M${x} ${ys[i]}l-1 5h2ZM${x} ${y}l-1 -5h2Z`} />
          <Mid x={x - 7} y={(y + ys[i]) / 2} t={l[i]} a={-90} />
        </g>
      ))}
    </g>
  );
}

function Level({ x, y, t, dx = 5, x2 }: { x: number; y: number; t: string; dx?: number; x2: number }) {
  return (
    <g>
      <path className="r" d={`M${x} ${y}H${x2}`} />
      <path className="y" d={`M${x} ${y}l-4 -6h8Z`} />
      <Label x={x + dx} y={y - 3} $size={11}>{t}</Label>
    </g>
  );
}

// A pile with its break symbol; flip swaps which half carries the closed lens.
function Pile({ x, flip }: { x: number; flip?: boolean }) {
  const m = x + 27;
  const e = x + 54;
  return (
    <g>
      <path className="g" d={`M${x} 726V802M${e} 726V802M${x} 820V898.500H${e}V820`} />
      <path className="g" d={`M${x} 802Q${x + 13} 816 ${m} 802${flip ? "Q" + (m + 13) + " 816 " + e + " 802" : "Q" + (m + 13) + " 816 " + e + " 802"}`} />
      <path className="g" d={`M${x} 820Q${x + 13} 806 ${m} 820Q${m + 13} 806 ${e} 820`} />
      <path className="g" d={flip ? `M${x} 802Q${x + 13} 788 ${m} 802M${m} 820Q${m + 13} 834 ${e} 820` : `M${m} 802Q${m + 13} 788 ${e} 802M${x} 820Q${x + 13} 834 ${m} 820`} />
    </g>
  );
}

function Heading({ x, y, gap, t, l, w }: { x: number; y: number; gap: number; t: string; l: number; w: number }) {
  return (
    <g>
      <Label x={x} y={y} $size={11} $bold textAnchor="middle">{t[0]}</Label>
      <Label x={x + gap} y={y} $size={11} $bold textAnchor="middle">{t[1]}</Label>
      <path className="bar" d={`M${l} ${y + 4}h${w}v3h${-w}ZM${l} ${y + 8}h${w}v1h${-w}Z`} />
    </g>
  );
}

const capX = [497.5, 530.5, 613.5, 746.5, 829.5, 863.5];
const pileX = [497.5, 545.5, 680.5, 815.5, 863.5];

function Elevation() {
  return (
    <g>
      <Heading x={667} y={290} gap={31} t="立面" l={660} w={44} />
      <path className="g" d="M316.500 323.500L646 317L1043.500 325.500V333.500L877 342.500L862.500 387.500H498.500L483 341.500L316.500 331.500Z" />
      <path className="g" d="M527.500 339L597.500 330L646 329L763 331.500L832.500 340.500L839.500 352L838 357L824 367.500H536.500L523 357L520.500 350Z" />
      <path className="solid" d="M520 389h30v6h-30ZM811 389h30v6h-30Z" />
      <path className="w" d="M509.500 420.500L530.500 485V553M850.500 420.500L829.500 485V553" />
      <path className="g" d="M530.500 664V553A415 415 0 0 0 509.500 420.500L502.500 400Q502 395 506 394.500H855Q859 395 858.500 400L850.500 420.500A415 415 0 0 0 829.500 553V664" />
      <path className="g" d="M583.500 394.500A415 415 0 0 1 613.500 550V664M592 394.500A415 415 0 0 1 622.500 550V664M768.500 394.500A415 415 0 0 0 738.500 550V664M777 394.500A415 415 0 0 0 746.500 550V664" />
      <path className="g" d="M497.500 664.500H863.500V726.500H497.500Z" />
      <Pile x={518.5} />
      <Pile x={653.5} />
      <Pile x={788.5} flip />
      <path className="c" d="M680.500 388V912M545.500 726V912M815.500 726V912" />

      <DimH y={379.5} xs={[498.5, 534.5, 825.5, 862.5]} labels="88.35 700 88.35" t0={376} t1={387} />
      <path className="r" d="M534.500 373V408M825.500 373V408" />
      <DimV x={646.5} ys={[317.5, 387.5]} labels="169.5" t0={638} t1={650} />
      <path className="r" d="M646.500 387V394" />
      <DimH y={590.5} xs={[530.5, 613.5, 746.5, 829.5]} labels="200 320 200" t0={577} t1={593} />
      <DimH y={606.5} xs={[530.5, 829.5]} labels="720" t0={593} t1={609} />
      <path className="r" d="M604 573.500H632M728 573.500H757M622.500 562V578M738.500 562V578M613.500 562V578M746.500 562V578" />
      <Mid x={618} y={567} t="20" />
      <Mid x={743} y={567} t="20" />
      <DimH y={682.5} xs={capX} labels="80 200 320 200 80" t0={668} t1={686} />
      <DimH y={742.5} xs={pileX} labels="115 325 325 115" t0={730} t1={746} />
      <DimH y={755.5} xs={[497.5, 518.5, 572.5, 653.5, 707.5, 788.5, 842.5, 863.5]} labels="50 130 195 130 195 130 50" t0={750} t1={758} />
      <DimH y={770.5} xs={[497.5, 863.5]} labels="880" t0={730} t1={774} />

      <DimV x={474.5} ys={[394.5, 400.5, 421.5, 553.5, 664.5]} labels="3.6 51.5 316.2 268.7" t0={470} t1={483} />
      <path className="r" d="M474.500 384V394M483 664.500H495" />
      <DimV x={485.5} ys={[664.5, 726.5]} labels="150" t0={482} t1={495} />
      <DimV x={897.5} ys={[394.5, 485.5, 553.5, 664.5]} labels="219.1 162.3 268.7" t0={884} t1={901} />

      <path className="r" d="M485 349L493 340.500H521M524 465.500L531 456.500H560M838 337.500H867L875 347M801 456.500H829L837 466" />
      <Label x={491} y={336} $size={11}>1:3直线</Label>
      <Label x={532} y={453} $size={11}>1:3直线</Label>
      <Label x={843} y={334} $size={11}>1:3直线</Label>
      <Label x={803} y={453} $size={11}>1:3直线</Label>

      <path className="r" d="M492 501L524 487M573 489L607 474M754 474L787 489.500M837 475L870 490M493 404L507 398M854 398L868 403" />
      <Mid x={508} y={490} t="R=1000" a={-22} />
      <Mid x={589} y={477} t="R=1000" a={-22} />
      <Mid x={773} y={478} t="R=1000" a={22} />
      <Mid x={856} y={479} t="R=1000" a={22} />
      <Mid x={486} y={406} t="R10" a={-18} />
      <Mid x={875} y={406} t="R10" a={14} />

      <path className="y" d="M476 318L528 314.500M881 313.500L955 315" />
      <path className="head" d="M476 318L488 312V316ZM955 315L944 312V315Z" />
      <Mid x={505} y={308} t="2.0%" s={10} />
      <Mid x={913} y={308} t="2.0%" s={10} />

      <path className="y" d="M859 394.500H884M797 485.500H830M797.500 485.500l-4 -6h8Z" />
      <Label x={802} y={482} $size={11}>6.374</Label>
      <Level x={870} y={394.5} t="8.565" x2={902} />
      <Level x={863} y={664.5} t="2.065" x2={901} />
      <Level x={863} y={726.5} t="0.565" x2={901} />
      <Level x={842} y={898.5} t="-42.00" x2={887} />
    </g>
  );
}

function SideView() {
  return (
    <g>
      <Heading x={1224} y={297} gap={22} t="侧面" l={1217} w={35} />
      <path className="g" d="M1188.500 310V339.500H1181L1197 350.500H1188.500V392M1288.500 310V339.500H1296L1281 350.500H1288.500V392M1188 317.500H1289M1188 367.500H1289M1188 387.500H1289" />
      <path className="solid" d="M1223 389h31v6h-31Z" />
      <path className="g" d="M1213.500 664V394.500H1263.500V664M1222.500 394V664M1255.500 394V664M1190.500 664.500H1286.500V726.500H1190.500Z" />
      <Pile x={1211.5} flip />
      <path className="r" d="M1238.500 373V408M1267 394.500H1310M1267 664.500H1290" />
      <path className="c" d="M1238.500 726V912" />
      <DimH y={489.5} xs={[1213.5, 1222.5, 1255.5, 1263.5]} labels="20 80 20" t0={479} t1={492} />
      <path className="r" d="M1203 489.500H1274" />
      <DimH y={503.5} xs={[1213.5, 1263.5]} labels="120" t0={492} t1={507} />
      <DimV x={1281.5} ys={[394.5, 664.5]} labels="650" t0={1278} t1={1284} />
      <DimV x={1180.5} ys={[664.5, 726.5]} labels="150" t0={1177} t1={1188} />
      <DimH y={676.5} xs={[1190.5, 1213.5, 1263.5, 1286.5]} labels="55 120 55" t0={668} t1={680} />
      <DimH y={738.5} xs={[1190.5, 1211.5, 1265.5, 1286.5]} labels="50 130 50" t0={730} t1={742} />
      <DimH y={751.5} xs={[1190.5, 1286.5]} labels="230" t0={730} t1={755} />
      <Level x={1305} y={394.5} t="8.565" x2={1339} />
      <Level x={1286} y={664.5} t="2.065" x2={1324} />
      <Level x={1286} y={726.5} t="0.565" x2={1324} />
      <Level x={1265} y={898.5} t="-42.00" x2={1311} />
    </g>
  );
}

function PlanView() {
  return (
    <g>
      <Heading x={665} y={930} gap={35} t="平面" l={657} w={50} />
      <path className="g" d="M497.500 964.500H863.500V1059.500H497.500Z" />
      <path className="g" d="M502 987.500H613.500L622 995.500H738.500L746.500 987.500H858L859.500 989V1036L858 1037.500H746.500L738.500 1028.500H622L613.500 1037.500H502L500.500 1036V989ZM530.500 987V1037M829.500 987V1037" />
      <path className="c" d="M495 1012.500H870" />
      {[545.5, 680.5, 815.5].map((x) => (
        <g key={x}>
          <circle className="w" cx={x} cy={1012} r={27} />
          <path className="r" d={`M${x} 979V1046M${x - 23} 1026L${x + 23} 998`} />
          <path className="arrow" d={`M${x - 23} 1026l5 -5l1 3ZM${x + 23} 998l-5 5l-1 -3Z`} />
          <Mid x={x + 5} y={1009} t="ϕ130" a={-31} />
        </g>
      ))}
      <DimH y={952.5} xs={capX} labels="80 200 320 200 80" t0={948} t1={961} />
      <DimH y={1072.5} xs={pileX} labels="115 325 325 115" t0={1063} t1={1076} />
      <DimH y={1086.5} xs={[497.5, 863.5]} labels="880" t0={1063} t1={1090} />
      <DimV x={875.5} ys={[964.5, 987.5, 1037.5, 1059.5]} labels="55 120 55" t0={866} t1={879} />
      <DimV x={606.5} ys={[987.5, 995.5, 1028.5, 1037.5]} labels="20 80 20" t0={602} t1={614} />
      <path className="r" d="M606.500 977V1047M502 989L504 997.500H520M502 1036L504 1027.500H520M859 989L857 997.500H841M859 1036L857 1027.500H841M618 991L622 987.500H645M618 1034L622 1037H645M743 991L739 987.500H715M743 1034L739 1037H715" />
      <Mid x={634} y={983} t="20x20" s={10} />
      <Mid x={729} y={983} t="20x20" s={10} />
      <Mid x={634} y={1041} t="20x20" s={10} />
      <Mid x={729} y={1041} t="20x20" s={10} />
      <Mid x={511} y={993} t="5x5" s={10} />
      <Mid x={511} y={1022} t="5x5" s={10} />
      <Mid x={848} y={993} t="5x5" s={10} />
      <Mid x={848} y={1022} t="5x5" s={10} />
    </g>
  );
}

const notes: [number, string][] = [
  [1040, "注："],
  [1053, "1、本图尺寸除标高以米计外，余均以厘米计。"],
  [1053, "2、本图适用于1#、4#桥墩。"],
  [1053, "3、立面图中，墩身外侧轮廓线组成：1：3的直线+半径R为10m的圆弧+竖直"],
  [1040, "线,为美观,在墩顶外侧做半径10cm的倒角。"],
  [1053, "4、桩顶伸入承台15cm。"],
  [1053, "5、本桩持力层为第5-3层土，设计桩底进入持力层1米，孔底沉渣厚度应小"],
  [1040, "于30厘米。"],
  [1053, "6、本图比例为1：80。"],
];

const menus = ["文件(F)", "编辑(E)", "视图(V)", "插入(I)", "格式(O)", "工具(T)", "绘图(D)", "标注(N)", "修改(M)", "参数(P)", "窗口(W)", "帮助(H)", "Express"];

const files: { name: string; w: number; active?: boolean; fixed?: boolean }[] = [
  { name: "开始", w: 122, fixed: true },
  { name: "SBVIII-4-33-33-泄水管构造图", w: 200 },
  { name: "s-02桥梁平面图", w: 124 },
  { name: "s-03太湖头服务区跨线桥总体布置", w: 218 },
  { name: "SBVIII-4-33-4...#桥台一般构造图(变更)", w: 258 },
  { name: "SBVIII-4-33-9-1#、4#桥墩一般构造图*", w: 253, active: true },
  { name: "SBVIII-4-33-...中横隔板普通钢筋构造图*", w: 257 },
];

const CloseMark = () => (
  <Glyph viewBox="0 0 10 10" $s={10} aria-hidden="true">
    <path d="M1.500 1.500L8.500 8.500M8.500 1.500L1.500 8.500" stroke="#a4a8ae" strokeWidth="2" />
  </Glyph>
);

const PlusMark = () => (
  <Glyph viewBox="0 0 10 10" $s={10} aria-hidden="true">
    <path d="M5 1V9M1 5H9" stroke="#a4a8ae" strokeWidth="2" />
  </Glyph>
);

export default function App() {
  return (
    <Window>
      <GlobalStyle />
      <Header>
        <TitleBar>
          <Quick>
            <ToolButton $w={24} aria-label="AutoCAD">
              <Glyph viewBox="0 0 16 16" aria-hidden="true">
                <path d="M1 16L6 0H11L15 15H11L10 12H6L4 15ZM7 9H10L8.500 4Z" fill="#c8373b" fillRule="evenodd" />
                <path d="M1 16L6 12H10L4 15Z" fill="#7c2427" />
              </Glyph>
            </ToolButton>
            <ToolButton $w={10} aria-label="应用程序菜单"><CaretShape /></ToolButton>
            <Gap $w={12} />
            {["new", "open", "save", "saveas", "device", "web", "print", "undo"].map((n) => (
              <ToolButton key={n} $w={24} aria-label={n}><Icon name={n} /></ToolButton>
            ))}
            <ToolButton $w={12} aria-label="放弃列表"><CaretShape $c="#a4a8ae" /></ToolButton>
            <ToolButton $w={24} aria-label="重做"><Icon name="redoOff" /></ToolButton>
            <ToolButton $w={12} aria-label="重做列表"><CaretShape $c="#8a8e95" /></ToolButton>
            <ToolButton $w={14} aria-label="自定义"><Icon name="custom" size={14} /></ToolButton>
            <ShareButton><Icon name="share" />共享</ShareButton>
          </Quick>
          <DocTitle>
            <span>Autodesk AutoCAD 2022</span>
            <span>SBVIII-4-33-9-1#、4#桥墩一般构造图.dwg</span>
          </DocTitle>
          <RightTools>
            <ToolButton $w={14} aria-label="展开搜索">
              <Glyph viewBox="0 0 8 8" $s={8} aria-hidden="true"><path d="M3 0L7 4L3 8Z" fill="#dcdcdc" /></Glyph>
            </ToolButton>
            <SearchBox aria-label="搜索" placeholder="键入关键字或短语" />
            <ToolButton $w={24} aria-label="搜索"><Icon name="search" /></ToolButton>
            <UserButton><Icon name="user" />1505999135...<CaretShape /></UserButton>
            <ToolButton $w={24} aria-label="购物车"><Icon name="cart" /></ToolButton>
            <ToolButton $w={24} aria-label="应用商店"><Icon name="app" /></ToolButton>
            <ToolButton $w={10} aria-label="更多"><CaretShape /></ToolButton>
            <Rule />
            <ToolButton $w={24} aria-label="帮助"><Icon name="help" /></ToolButton>
            <ToolButton $w={10} aria-label="帮助菜单"><CaretShape /></ToolButton>
            <WindowKeys>
              {["min", "max", "close"].map((n) => (
                <ToolButton key={n} $w={24} aria-label={n}><Icon name={n} /></ToolButton>
              ))}
            </WindowKeys>
          </RightTools>
        </TitleBar>
        <MenuBar>
          {menus.map((m) => <MenuItem key={m}>{m}</MenuItem>)}
          <WindowKeys>
            {["min", "restore", "close"].map((n) => (
              <ToolButton key={n} $w={18} $h={20} aria-label={n}><Icon name={n} /></ToolButton>
            ))}
          </WindowKeys>
        </MenuBar>
      </Header>

      <TabStrip>
        {files.map((f) => (
          <FileTab key={f.name} $w={f.w} $active={f.active}>
            <button>{f.name}</button>
            {!f.fixed && <button aria-label={"关闭 " + f.name}><CloseMark /></button>}
          </FileTab>
        ))}
        <AddTab aria-label="新建图形"><PlusMark /></AddTab>
        <OverflowTab aria-label="更多选项卡"><Icon name="overflow" size={14} /></OverflowTab>
      </TabStrip>

      <Work>
        <ToolRow>
          <Bar>
            <Grip />
            <Buttons names="new open save | print preview publish globe | cut copy paste match blockEdit | undo v redo v | pan zoom zoomWin zoomPrev | props center palettes sheets markup calc | help" />
          </Bar>
          <Bar>
            <Grip />
            <Buttons names="layers" />
            <ComboBox w={300} label="图层" value="DIM" indent={1}>
              <Icon name="bulb" /><Icon name="sun" /><Icon name="vp" /><Icon name="lock" /><Swatch />
            </ComboBox>
            <Buttons names="layerCur layerPrev layerState" />
          </Bar>
          <Bar>
            <Grip />
            <ComboBox w={150} label="颜色" value="ByLayer"><Swatch $gap={1} /></ComboBox>
            <Divider />
            <ComboBox w={160} label="线型" value="ByLayer" indent={1}><LineSample $w={60} /></ComboBox>
            <Divider />
            <ComboBox w={125} label="线宽" value="ByLayer" indent={1}><LineSample $w={35} /></ComboBox>
            <Divider />
            <ComboBox w={120} label="打印样式" value="ByColor" indent={5} off />
          </Bar>
        </ToolRow>
        <ToolRow>
          <Bar>
            <Grip />
            <Buttons names="bookEdit bookCheck layerDel" />
          </Bar>
          <Bar>
            <Grip />
            <Buttons names="dimLin dimAli dimArc dimOrd | dimRad dimJog dimDia dimAng | dimQuick dimBase dimCont dimSpace dimBreak | tol mark inspect jogLine | dimEdit dimText dimUpd |" />
            <ComboBox w={120} label="标注样式" value="DIM80" indent={14} />
            <Buttons names="dimStyle" />
          </Bar>
          <Bar>
            <Grip />
            <Buttons names="union subtract intersect | extrude moveFace offsetFace delFace rotFace taper copyFace colorFace | filletEdge chamferEdge copyEdge colorEdge | imprint clean separate shell check" />
          </Bar>
        </ToolRow>

        <Middle>
          <Side>
            <Bar $vertical>
              <Grip $vertical />
              <Buttons w={22} names="line xline pline polygon rect arc circle cloud spline ellipse ellArc insert block point hatch gradient region table text addSel" />
            </Bar>
          </Side>
          <Model>
            <Sheet viewBox="33 133 1576 1205">
              <Drawing>
                <Elevation />
                <SideView />
                <PlanView />
              </Drawing>
              {notes.map(([x, t], i) => (
                <NoteLine key={i} x={x} y={931 + i * 25}>{t}</NoteLine>
              ))}
            </Sheet>
            <ViewLabel>[−][俯视][二维线框]</ViewLabel>
            <Cube>
              <CubeSvg viewBox="0 -6 130 150" role="img" aria-label="ViewCube">
                <circle cx="65" cy="68" r="54" fill="none" stroke="#454b52" strokeWidth="13" />
                <rect x="39.500" y="42.500" width="51" height="51" fill="#b1b3b5" stroke="#858789" />
                <rect x="49" y="52" width="32" height="32" fill="#a0a7ac" />
                <g fontSize="19" fill="#b4b6b8" textAnchor="middle">
                  <text x="65" y="20">北</text>
                  <text x="65" y="133">南</text>
                  <text x="9" y="76">西</text>
                  <text x="121" y="76">东</text>
                </g>
                <text x="65" y="79" fontSize="30" fontWeight="300" fill="#4f555b" textAnchor="middle">上</text>
              </CubeSvg>
              <Wcs>
                WCS
                <Glyph viewBox="0 0 10 6" $s={10} aria-hidden="true"><path d="M1 1H9L5 5Z" fill="none" stroke="#c6c7d0" /></Glyph>
              </Wcs>
            </Cube>
            <Ucs viewBox="0 0 80 80" role="img" aria-label="UCS">
              <g fill="none" stroke="#e0e0e0">
                <path d="M8.500 20V70.500H58M4.500 66.500H13.500V75.500H4.500Z" />
                <path d="M10 3L16 10V16M22 3L16 10M63 57L75 69M75 57L63 69" />
              </g>
            </Ucs>
            <Command>
              <History>
                <HistoryLine $tone={0}>{"Autodesk DWG。  此文件上次由 Autodesk 应用程序或 Autodesk 许可的应用程序保存, 是可靠的 DWG。"}</HistoryLine>
                <HistoryLine $tone={1}>命令:</HistoryLine>
                <HistoryLine $tone={2}>命令:</HistoryLine>
              </History>
              <CommandRow>
                <Gap $w={3} />
                <Grip />
                <ToolButton $w={18} $h={25} aria-label="关闭命令行"><CloseMark /></ToolButton>
                <ToolButton $w={28} $h={25} aria-label="自定义命令行"><Icon name="wrench" /></ToolButton>
                <CommandInput>
                  <Icon name="prompt" />
                  <CaretShape $c="#555555" />
                  <CommandText aria-label="命令" placeholder="键入命令" />
                  <UpMark />
                </CommandInput>
              </CommandRow>
            </Command>
          </Model>
          <Side $right>
            <Bar $vertical>
              <Grip $vertical />
              <Buttons w={22} names="erase copyObj mirror offset array move rotate scale stretch trim extend breakPt breakObj join chamfer fillet blend explode" />
            </Bar>
          </Side>
        </Middle>
      </Work>

      <Footer>
        <LayoutTab $w={45} $on>模型</LayoutTab>
        <LayoutTab $w={61}>Layout1</LayoutTab>
        <ToolButton $w={30} $h={18} aria-label="新建布局"><PlusMark /></ToolButton>
        <Status>
          <StatusGroup><ToolButton $w={28}>模型</ToolButton></StatusGroup>
          <StatusGroup>
            <ToolButton aria-label="栅格"><Icon name="grid" /></ToolButton>
            <ToolButton aria-label="捕捉"><Icon name="snap" /></ToolButton>
            <ToolButton $w={16} aria-label="捕捉设置"><CaretShape /></ToolButton>
          </StatusGroup>
          <StatusGroup>
            <ToolButton $on aria-label="正交"><Icon name="ortho" /></ToolButton>
            <ToolButton aria-label="极轴"><Icon name="polar" /></ToolButton>
            <ToolButton $w={16} aria-label="极轴设置"><CaretShape /></ToolButton>
            <ToolButton aria-label="等轴测"><Icon name="iso" /></ToolButton>
            <ToolButton $w={16} aria-label="等轴测设置"><CaretShape /></ToolButton>
            <ToolButton $w={25} aria-label="追踪"><Icon name="track" /></ToolButton>
            <ToolButton $on aria-label="对象捕捉"><Icon name="osnap" /></ToolButton>
            <ToolButton $w={16} aria-label="对象捕捉设置"><CaretShape /></ToolButton>
          </StatusGroup>
          <StatusGroup><ToolButton $w={22} aria-label="线宽"><Icon name="weight" /></ToolButton></StatusGroup>
          <StatusGroup>
            <ToolButton $on aria-label="注释可见性"><Icon name="annoVis" /></ToolButton>
            <ToolButton $w={24} aria-label="自动缩放"><Icon name="annoAuto" /></ToolButton>
            <ToolButton $w={24} aria-label="注释比例"><Icon name="anno" /></ToolButton>
            <ToolButton $w={33} aria-label="1:1">1:1<CaretShape /></ToolButton>
          </StatusGroup>
          <StatusGroup>
            <ToolButton aria-label="切换工作空间"><Icon name="gear" /></ToolButton>
            <ToolButton $w={13} aria-label="工作空间列表"><CaretShape /></ToolButton>
          </StatusGroup>
          <StatusGroup><ToolButton aria-label="注释监视器"><Icon name="plus" /></ToolButton></StatusGroup>
          <StatusGroup><ToolButton aria-label="隔离对象"><Icon name="isolate" /></ToolButton></StatusGroup>
          <StatusGroup><ToolButton $w={20} aria-label="图形性能"><Icon name="hardware" /></ToolButton></StatusGroup>
          <StatusGroup>
            <ToolButton aria-label="全屏显示"><Icon name="screen" /></ToolButton>
            <ToolButton aria-label="自定义"><Icon name="menu" /></ToolButton>
          </StatusGroup>
        </Status>
      </Footer>
    </Window>
  );
}
